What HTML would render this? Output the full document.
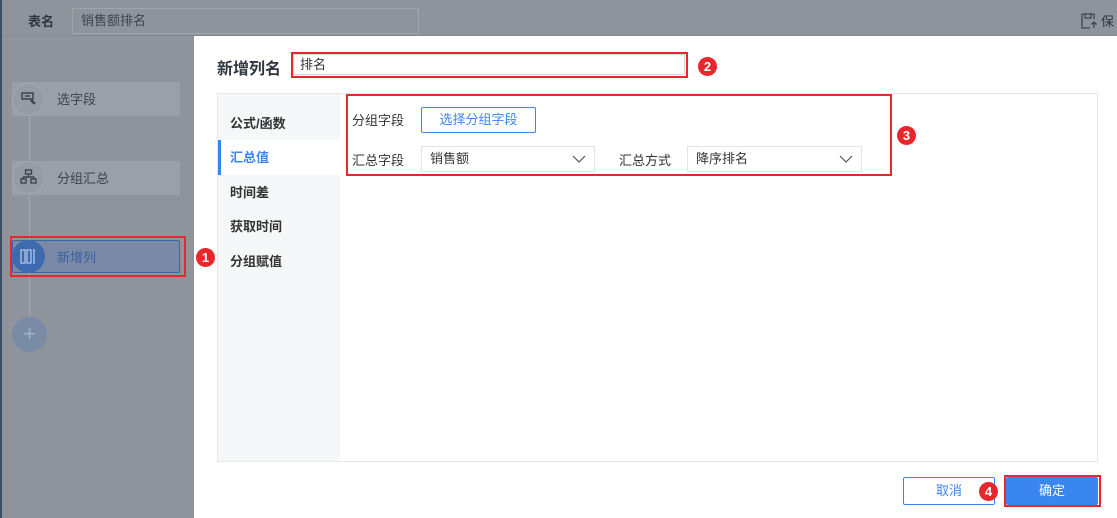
<!DOCTYPE html>
<html><head><meta charset="utf-8"><style>
*{box-sizing:border-box;margin:0;padding:0}
body{width:1117px;height:518px;overflow:hidden;position:relative;background:#8f949c;font-family:"Liberation Sans","Noto Sans CJK SC",sans-serif;font-size:13px;color:#333}
.a{position:absolute}
.badge{position:absolute;width:19px;height:19px;border-radius:50%;background:#e8262b;color:#fff;font-size:13px;line-height:19px;text-align:center;font-weight:bold}
.red{position:absolute;border:2px solid #e8262b}
.pill{position:absolute;left:12px;width:168px;height:34px;background:#9ba0a8;border-radius:2px}
.circ{position:absolute;left:12px;width:33px;height:33px;border-radius:50%;background:#979ca4;border:1px solid #a3a7ae}
.lbl{position:absolute;left:57px;color:#3c4350;font-size:13px}
.menu{position:absolute;left:230px;font-weight:bold;font-size:13px;color:#333}
.sel{position:absolute;height:26px;border:1px solid #e2e4e8;background:#fff;padding-left:8px;line-height:24px}
.sel svg{position:absolute;right:8px;top:8px}
</style></head><body>
<div class="a" style="left:0;top:0;width:2px;height:518px;background:#3d4d66"></div>
<div class="a" style="left:2px;top:35px;width:1115px;height:1px;background:#848993"></div>
<div class="a" style="left:28px;top:11px;font-weight:bold;color:#2f3540">表名</div>
<div class="a" style="left:72px;top:8px;width:347px;height:26px;border:1px solid #a0a4ab;padding-left:8px;line-height:24px;color:#3c4350">销售额排名</div>
<svg class="a" style="left:1081px;top:13px" width="16" height="16" viewBox="0 0 16 16" fill="none" stroke="#3c4350" stroke-width="1.3"><path d="M1 1h12v5M1 1v14h8M4 1v4h6V1M13 9v6M10.5 11.5L13 9l2.5 2.5"/></svg>
<div class="a" style="left:1101px;top:11px;color:#2f3540">保</div>
<div class="a" style="left:29px;top:110px;width:1px;height:210px;background:#a4a8ae"></div>
<div class="pill" style="top:82px"></div><div class="circ" style="top:83px"></div>
<svg class="a" style="left:21px;top:92px" width="16" height="14" viewBox="0 0 16 14" fill="none" stroke="#3c4350" stroke-width="1.5"><rect x="1" y="1" width="11" height="6"/><path d="M4 4h5"/><path d="M10 8l4 4" stroke-width="2.5"/></svg>
<div class="lbl" style="top:89px">选字段</div>
<div class="pill" style="top:161px"></div><div class="circ" style="top:161px"></div>
<svg class="a" style="left:20px;top:169px" width="17" height="16" viewBox="0 0 17 16" fill="none" stroke="#3c4350" stroke-width="1.4"><rect x="5.5" y="1" width="6" height="4"/><path d="M8.5 5v3M3 8h11M3 8v2M14 8v2"/><rect x="1" y="10" width="5" height="4"/><rect x="11" y="10" width="5" height="4"/></svg>
<div class="lbl" style="top:168px">分组汇总</div>
<div class="a" style="left:12px;top:240px;width:168px;height:33px;background:#7a8aa6;border:1px solid #3a66b0;border-radius:2px"></div>
<div class="a" style="left:12px;top:240px;width:33px;height:33px;border-radius:50%;background:#3e6bb0"></div>
<svg class="a" style="left:20px;top:249px" width="18" height="15" viewBox="0 0 18 15" fill="none" stroke="#a8bde0" stroke-width="1.4"><rect x="1" y="1" width="4" height="13"/><rect x="7" y="1" width="4" height="13"/><path d="M14 1v13M13 1h2M13 14h2"/></svg>
<div class="lbl" style="top:247px;color:#3a5f9f">新增列</div>
<div class="red" style="left:10px;top:236px;width:176px;height:41px"></div>
<div class="a" style="left:12px;top:317px;width:35px;height:35px;border-radius:50%;background:#7a8ba6;color:#9fb0cc;font-size:22px;line-height:33px;text-align:center">+</div>
<div class="a" style="left:194px;top:36px;width:923px;height:482px;background:#fff"></div>
<div class="a" style="left:217px;top:55px;font-size:16px;font-weight:bold;color:#2f3540">新增列名</div>
<div class="a" style="left:293px;top:54px;width:392px;height:21px;border:1px solid #d6d8dc;padding-left:6px;line-height:19px;font-size:13px">排名</div>
<div class="red" style="left:291px;top:52px;width:397px;height:26px"></div>
<div class="badge" style="left:698px;top:57px">2</div>
<div class="a" style="left:217px;top:93px;width:881px;height:369px;border:1px solid #e5e6e8"></div>
<div class="a" style="left:218px;top:94px;width:122px;height:367px;background:#f6f7f9"></div>
<div class="a" style="left:218px;top:140px;width:122px;height:35px;background:#fff;border-left:3px solid #3a86f0"></div>
<div class="menu" style="top:113px">公式/函数</div>
<div class="menu" style="top:147px;color:#3a86f0">汇总值</div>
<div class="menu" style="top:182px">时间差</div>
<div class="menu" style="top:216px">获取时间</div>
<div class="menu" style="top:251px">分组赋值</div>
<div class="badge" style="left:196px;top:248px">1</div>
<div class="a" style="left:352px;top:110px;color:#333">分组字段</div>
<div class="a" style="left:421px;top:107px;width:115px;height:26px;border:1px solid #3a86f0;border-radius:2px;color:#3a86f0;text-align:center;line-height:24px">选择分组字段</div>
<div class="a" style="left:352px;top:150px">汇总字段</div>
<div class="sel" style="left:421px;top:146px;width:174px">销售额<svg width="14" height="9" viewBox="0 0 14 9" fill="none" stroke="#555" stroke-width="1.2"><path d="M1 1l6 6 6-6"/></svg></div>
<div class="a" style="left:619px;top:150px">汇总方式</div>
<div class="sel" style="left:687px;top:146px;width:175px">降序排名<svg width="14" height="9" viewBox="0 0 14 9" fill="none" stroke="#555" stroke-width="1.2"><path d="M1 1l6 6 6-6"/></svg></div>
<div class="red" style="left:346px;top:94px;width:546px;height:82px"></div>
<div class="badge" style="left:897px;top:126px">3</div>
<div class="a" style="left:903px;top:477px;width:92px;height:28px;border:1px solid #3a86f0;border-radius:2px;color:#3a86f0;text-align:center;line-height:26px">取消</div>
<div class="badge" style="left:979px;top:482px">4</div>
<div class="a" style="left:1006px;top:477px;width:92px;height:28px;background:#3a86f0;border-radius:2px;color:#fff;text-align:center;line-height:28px">确定</div>
<div class="red" style="left:1004px;top:475px;width:97px;height:32px"></div>
</body></html>
